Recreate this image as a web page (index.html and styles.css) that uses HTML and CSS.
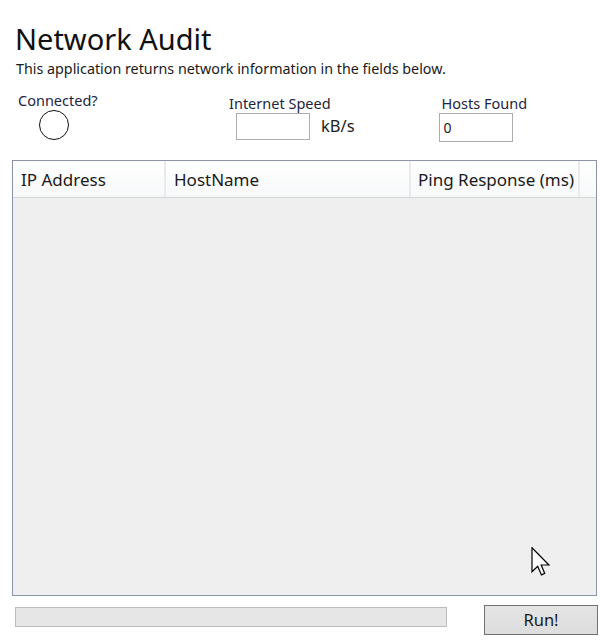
FILE: index.html
```html
<!DOCTYPE html>
<html>
<head>
<meta charset="utf-8">
<link rel="stylesheet" href="styles.css">
</head>
<body>
<div class="window">
  <h1 class="title">Network Audit</h1>
  <p class="subtitle">This application returns network information in the fields below.</p>
  <div class="controls">
    <div class="group connected">
      <span class="label">Connected?</span>
      <span class="led"></span>
    </div>
    <div class="group speed">
      <span class="label">Internet Speed</span>
      <div class="speed-row">
        <span class="textbox"></span>
        <span class="unit">kB/s</span>
      </div>
    </div>
    <div class="group hosts">
      <span class="label">Hosts Found</span>
      <span class="textbox">0</span>
    </div>
  </div>
  <div class="listview">
    <div class="lv-header">
      <div class="col col-ip">IP Address</div>
      <div class="col col-host">HostName</div>
      <div class="col col-ping">Ping Response (ms)</div>
      <div class="col col-fill"></div>
    </div>
    <div class="lv-body"></div>
  </div>
  <div class="footer">
    <div class="progress"></div>
    <button class="run">Run!</button>
  </div>
  <svg class="cursor" width="20" height="30" viewBox="0 0 13 20">
    <path d="M0.5 0.5 L0.5 16.5 L4.3 12.8 L6.8 18.6 L9 17.6 L6.6 12 L11.8 12 Z" fill="#fff" stroke="#000" stroke-width="0.8" stroke-linejoin="miter"/>
  </svg>
</div>
</body>
</html>
```

FILE: styles.css
```css
html, body {
  margin: 0;
  padding: 0;
  background: #ffffff;
}
body {
  font-family: "Noto Sans", "Open Sans", sans-serif;
  color: #1a1a1a;
}
.window {
  position: relative;
  width: 600px;
  height: 641px;
  overflow: hidden;
}
.title {
  margin: 20px 0 0 15px;
  font-size: 29px;
  font-weight: 400;
  line-height: 38px;
  color: #111;
}
.subtitle {
  margin: 1px 0 0 16px;
  font-size: 14.3px;
  line-height: 20px;
  color: #1a1a1a;
}
.controls {
  display: flex;
  align-items: flex-start;
  height: 69px;
  margin-top: 12px;
}
.group {
  display: flex;
  flex-direction: column;
}
.label {
  font-size: 14.5px;
  line-height: 18px;
  color: #1e2440;
}
.connected {
  margin-left: 18px;
  width: 82px;
  align-items: flex-start;
}
.led {
  width: 28px;
  height: 28px;
  border: 1.6px solid #111;
  border-radius: 50%;
  margin: 1px 0 0 21px;
}
.speed {
  margin-left: 129px;
  margin-top: 3px;
}
.speed-row {
  display: flex;
  align-items: center;
  margin-top: 1px;
}
.textbox {
  box-sizing: border-box;
  display: block;
  width: 74px;
  height: 27px;
  border: 1px solid #acadb3;
  background: #fff;
  font-size: 14px;
  line-height: 25px;
  padding-left: 4px;
  color: #222;
}
.speed .textbox {
  margin-left: 7px;
}
.unit {
  margin-left: 11px;
  font-size: 16.5px;
  color: #222;
  margin-top: -3px;
}
.hosts {
  margin-left: 84px;
  margin-top: 3px;
}
.hosts .label {
  margin-left: 3px;
}
.hosts .textbox {
  height: 29px;
  line-height: 27px;
  margin-top: 1px;
}
.listview {
  box-sizing: border-box;
  margin-left: 12px;
  width: 585px;
  height: 436px;
  border: 1px solid #8a94a8;
  background: #efefef;
  display: flex;
  flex-direction: column;
}
.lv-header {
  display: flex;
  height: 36px;
  background: linear-gradient(#ffffff, #f7f8f9);
  border-bottom: 1px solid #d5d5d5;
}
.col {
  box-sizing: border-box;
  font-size: 17px;
  line-height: 37px;
  padding-left: 8px;
  color: #1a1a1a;
  border-right: 2px solid #e9eaeb;
  white-space: nowrap;
}
.col-ip { width: 153px; }
.col-host { width: 245px; }
.col-ping { width: 169px; padding-left: 7px; }
.col-fill { flex: 1; border-right: none; }
.lv-body {
  flex: 1;
}
.footer {
  display: flex;
  align-items: flex-start;
  margin-top: 9px;
}
.progress {
  box-sizing: border-box;
  margin: 2px 0 0 15px;
  width: 432px;
  height: 20px;
  border: 1px solid #bcbcbc;
  background: #e6e6e6;
}
.run {
  box-sizing: border-box;
  margin-left: 37px;
  width: 114px;
  height: 30px;
  border: 1px solid #707070;
  background: linear-gradient(#e4e4e4, #dddddd);
  font-family: "Noto Sans", "Open Sans", sans-serif;
  font-size: 16.5px;
  color: #1a1a1a;
  padding: 0;
  line-height: 26px;
}
.cursor {
  position: absolute;
  left: 531px;
  top: 547px;
}
```
